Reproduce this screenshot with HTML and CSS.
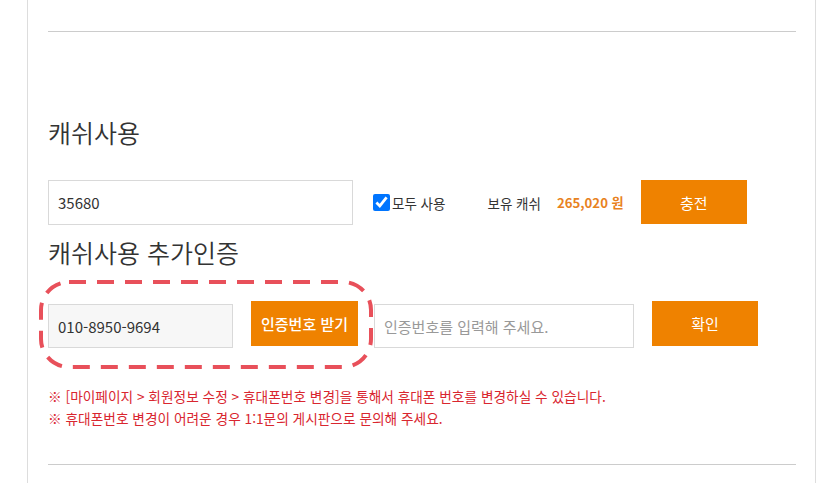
FILE: index.html
```html
<!DOCTYPE html>
<html lang="ko">
<head>
<meta charset="utf-8">
<link rel="stylesheet" href="styles.css">
</head>
<body>
<div class="frame">
  <div class="inner">
    <hr class="rule rule-top">
    <h2 class="title title-cash">캐쉬사용</h2>
    <div class="row row-cash">
      <input class="field field-cash" type="text" value="35680">
      <label class="check"><input type="checkbox" checked><span>모두 사용</span></label>
      <span class="hold-label">보유 캐쉬</span>
      <span class="hold-amount">265,020 원</span>
      <button class="btn btn-charge">충전</button>
    </div>
    <h2 class="title title-auth">캐쉬사용 추가인증</h2>
    <div class="row row-auth">
      <div class="phone-group">
        <input class="field field-phone" type="text" value="010-8950-9694">
        <button class="btn btn-send">인증번호 받기</button>
        <svg class="highlight" width="334" height="89" viewBox="0 0 334 89">
          <rect x="2" y="2" width="330" height="85" rx="28" ry="28" fill="none" stroke="#e8505a" stroke-width="4" stroke-dasharray="17 11"/>
        </svg>
      </div>
      <input class="field field-code" type="text" placeholder="인증번호를 입력해 주세요.">
      <button class="btn btn-confirm">확인</button>
    </div>
    <div class="notes">
      <p>※ [마이페이지 &gt; 회원정보 수정 &gt; 휴대폰번호 변경]을 통해서 휴대폰 번호를 변경하실 수 있습니다.</p>
      <p>※ 휴대폰번호 변경이 어려운 경우 1:1문의 게시판으로 문의해 주세요.</p>
    </div>
    <hr class="rule rule-bottom">
  </div>
</div>
</body>
</html>
```
FILE: styles.css
```css
* { box-sizing: border-box; }
html, body { margin: 0; padding: 0; background: #fff; }
body {
  font-family: "Noto Sans CJK KR", "Noto Sans", sans-serif;
  color: #333;
  height: 483px;
  overflow: hidden;
}
.frame {
  margin-left: 27px;
  width: 789px;
  border-left: 1px solid #ddd;
  border-right: 1px solid #ddd;
  min-height: 483px;
}
.inner {
  padding: 31px 19px 0 20px;
}
.rule {
  margin: 0;
  border: 0;
  height: 1px;
  background: #ccc;
}
.title {
  margin: 0;
  font-size: 25px;
  line-height: 32px;
  font-weight: 350;
  color: #333;
}
.title-cash { margin-top: 84px; }
.title-auth { margin-top: 11px; }
.row { display: flex; }
.row-cash {
  margin-top: 32px;
  height: 45px;
  align-items: center;
}
.field {
  border: 1px solid #d9d9d9;
  background: #fff;
  font-family: inherit;
  font-size: 15px;
  color: #333;
  padding: 0 9px;
  outline: none;
}
.field-cash { width: 305px; height: 45px; }
.check {
  display: flex;
  align-items: center;
  margin-left: 20px;
  font-size: 13.5px;
  color: #333;
}
.check input {
  margin: 0 2px 0 0;
  width: 17px;
  height: 17px;
}
.hold-label {
  margin-left: 42px;
  font-size: 13.5px;
  color: #333;
}
.hold-amount {
  margin-left: 16px;
  font-size: 13.2px;
  font-weight: 700;
  color: #e8821e;
}
.btn {
  border: 0;
  background: #ef8200;
  color: #fff;
  font-family: inherit;
  font-size: 15px;
  cursor: pointer;
  padding: 0;
}
.btn-charge {
  margin-left: 17px;
  width: 106px;
  height: 44px;
  margin-top: -1px;
}
.row-auth {
  margin-top: 33px;
  align-items: flex-start;
}
.phone-group {
  position: relative;
  display: flex;
  align-items: flex-start;
}
.field-phone {
  margin-top: 3px;
  width: 185px;
  height: 44px;
  background: #f7f7f7;
}
.btn-send {
  margin-left: 18px;
  width: 107px;
  height: 45px;
  font-size: 15px;
  font-weight: 500;
}
.highlight {
  position: absolute;
  left: -9px;
  top: -21px;
}
.field-code {
  margin-left: 16px;
  margin-top: 3px;
  width: 260px;
  height: 44px;
}
.field-code::placeholder { color: #999; }
.btn-confirm {
  margin-left: 18px;
  width: 106px;
  height: 45px;
}
.notes {
  margin-top: 37px;
  font-size: 13.7px;
  line-height: 22px;
  color: #d9262f;
}
.notes p { margin: 0; }
.rule-bottom { margin-top: 35px; }
```
